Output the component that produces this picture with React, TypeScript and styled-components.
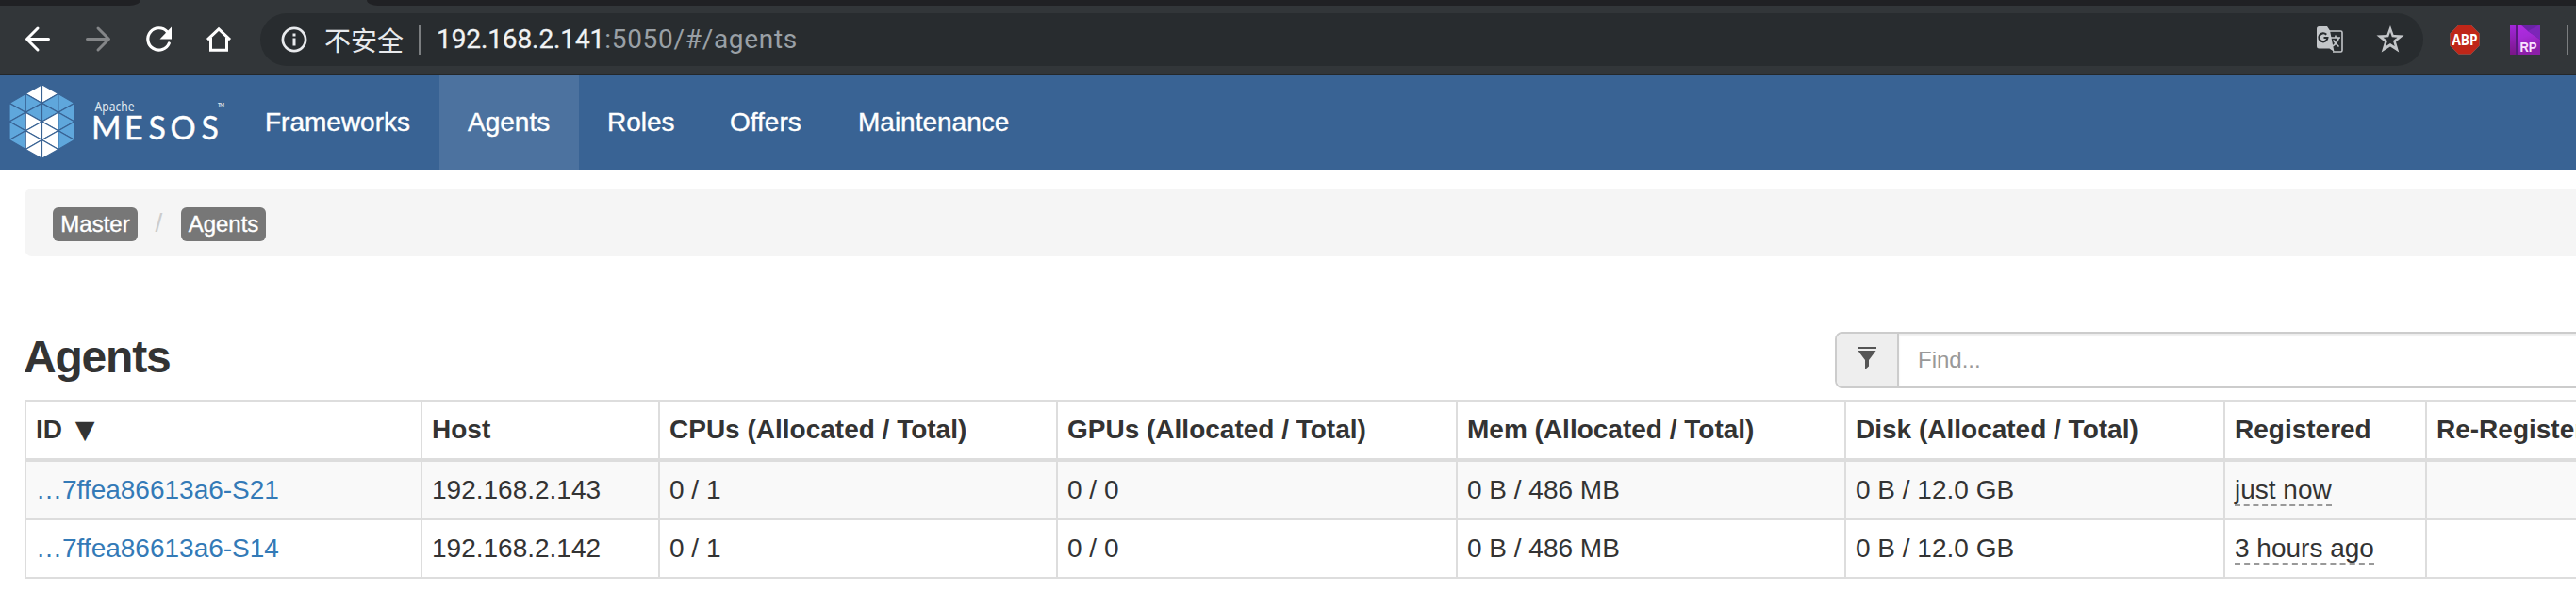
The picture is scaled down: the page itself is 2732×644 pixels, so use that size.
import React from 'react';
import styled, { createGlobalStyle, css } from 'styled-components';

const GlobalStyle = createGlobalStyle`
  * { box-sizing: border-box; }
  html, body { margin: 0; padding: 0; overflow: hidden; background: #fff; }
  body {
    font-family: "Liberation Sans", "Noto Sans CJK SC", sans-serif;
    font-size: 28px;
    line-height: 40px;
    color: #333;
  }
`;

const Page = styled.div`
  width: 2732px;
  height: 644px;
  overflow: hidden;
  background: #fff;
`;

const TabStrip = styled.div`
  display: flex;
  justify-content: space-between;
  height: 6px;
  background: #323639;
`;

const InactiveTabs = styled.div<{ $side: 'left' | 'right' }>`
  height: 6px;
  background: #202124;
  ${(p) =>
    p.$side === 'left'
      ? css`width: 149px; border-bottom-right-radius: 12px 6px;`
      : css`width: 2343px; border-bottom-left-radius: 12px 6px;`}
`;

const Toolbar = styled.div`
  display: flex;
  align-items: center;
  height: 74px;
  padding: 0 8px 1px 24px;
  background: #323639;
  border-bottom: 1px solid #242729;
  overflow: hidden;
`;

const NavButton = styled.span`
  display: flex;
  flex: none;
  width: 32px;
  height: 32px;
  margin-right: 32px;
`;

const Omnibox = styled.div`
  display: flex;
  align-items: center;
  flex: none;
  width: 2294px;
  height: 56px;
  margin-left: -4px;
  padding: 0 20px 0 21px;
  border-radius: 28px;
  background: #282c2f;
`;

const Insecure = styled.span`
  margin-left: 17px;
  font-family: "Noto Sans CJK SC", sans-serif;
  font-size: 28px;
  color: #e8eaed;
`;

const Separator = styled.span<{ $left: number }>`
  flex: none;
  width: 2px;
  height: 32px;
  margin-left: ${(p) => p.$left}px;
  background: #7b7e80;
`;

const Url = styled.span`
  flex: 1;
  margin-left: 17px;
  font-family: Roboto, sans-serif;
  letter-spacing: 0.7px;
  color: #9aa0a6;
`;

const Domain = styled.span`
  letter-spacing: -0.1px;
  color: #f1f3f4;
  -webkit-text-stroke: 0.3px #f1f3f4;
`;

const OmniIcon = styled.span<{ $left?: number }>`
  display: flex;
  flex: none;
  margin-left: ${(p) => p.$left ?? 0}px;
`;

const Navbar = styled.nav`
  display: flex;
  height: 100px;
  background: #396394;
`;

const Brand = styled.div`
  flex: none;
  width: 251px;
  height: 100px;
`;

const NavItem = styled.a<{ $width: number; $active?: boolean }>`
  flex: none;
  width: ${(p) => p.$width}px;
  padding: 30px 0 30px 30px;
  color: #fff;
  -webkit-text-stroke: 0.4px #fff;
  white-space: nowrap;
  background: ${(p) => (p.$active ? '#4c729f' : 'transparent')};
`;

const Content = styled.main`
  width: 2860px;
  padding: 20px 0 0 26px;
`;

const Breadcrumb = styled.div`
  display: flex;
  align-items: flex-start;
  height: 72px;
  padding: 20px 30px;
  border-radius: 8px;
  background: #f5f5f5;
`;

const Crumb = styled.span`
  width: 90px;
  height: 36px;
  border-radius: 6px;
  background: #777;
  color: #fff;
  font-size: 24px;
  line-height: 36px;
  text-align: center;
  -webkit-text-stroke: 0.4px #fff;
`;

const Slash = styled.span`
  width: 45px;
  margin-right: 1px;
  line-height: 34px;
  text-align: center;
  color: #ccc;
`;

const TitleRow = styled.div`
  display: flex;
  justify-content: space-between;
  align-items: flex-start;
  height: 152px;
  padding-top: 80px;
`;

const Title = styled.h2`
  margin: 0 0 0 -1px;
  font-size: 48px;
  line-height: 54px;
  font-weight: 700;
  letter-spacing: -1.2px;
`;

const Search = styled.div`
  display: flex;
  width: 914px;
  height: 60px;
  border: 2px solid #ccc;
  border-radius: 8px;
  overflow: hidden;
`;

const Addon = styled.span`
  display: flex;
  width: 66px;
  padding: 14px 0 0 21px;
  border-right: 2px solid #ccc;
  background: #eee;
`;

const Field = styled.div`
  flex: 1;
  padding: 10px 20px;
  font-size: 24px;
  line-height: 36px;
  color: #999;
  box-shadow: inset 0 2px 2px rgba(0, 0, 0, 0.075);
`;

const Table = styled.table`
  table-layout: fixed;
  width: 2832px;
  border-collapse: separate;
  border-spacing: 0;
  border: 0 solid #ddd;
  border-width: 2px 0 0 2px;
`;

const HeadCell = styled.th<{ $width: number }>`
  width: ${(p) => p.$width}px;
  height: 64px;
  padding: 10px;
  border: 0 solid #ddd;
  border-width: 0 2px 4px 0;
  text-align: left;
  white-space: nowrap;
`;

const Row = styled.tr<{ $striped: boolean }>`
  background: ${(p) => (p.$striped ? '#f9f9f9' : '#fff')};
`;

const Cell = styled.td`
  height: 62px;
  padding: 10px;
  border: 0 solid #ddd;
  border-width: 0 2px 2px 0;
  white-space: nowrap;
`;

const AgentLink = styled.a`
  color: #337ab7;
`;

const Ago = styled.span`
  border-bottom: 2px dashed #999;
`;

const SortMark = styled.span`
  margin-left: 6px;
  font-family: "DejaVu Sans", sans-serif;
  font-size: 27px;
  font-weight: 400;
  line-height: 20px;
`;

const BackIcon = () => (
  <svg width="32" height="32" viewBox="24 26 32 32" fill="none" stroke="#fff" strokeWidth="3" strokeLinecap="round" strokeLinejoin="round">
    <path d="M51.5 41.5H29M40 30L28.5 41.5L40 53" />
  </svg>
);

const ForwardIcon = () => (
  <svg width="32" height="32" viewBox="88 26 32 32" fill="none" stroke="#848688" strokeWidth="3" strokeLinecap="round" strokeLinejoin="round">
    <path d="M92.5 41.5H115M104 30L115.5 41.5L104 53" />
  </svg>
);

const ReloadIcon = () => (
  <svg width="32" height="32" viewBox="152 26 32 32">
    <path d="M177.2 33.6A11.7 11.7 0 1 0 179.3 46" fill="none" stroke="#fff" strokeWidth="3.2" strokeLinecap="round" />
    <path d="M182 28.5V41.5H169.5Z" fill="#fff" />
  </svg>
);

const HomeIcon = () => (
  <svg width="32" height="32" viewBox="216 26 32 32" fill="none" stroke="#fff" strokeWidth="3">
    <path d="M220 42.2L232 30.8L244 42.2" />
    <path d="M223.5 40V53.2H240.5V40" />
  </svg>
);

const InfoIcon = () => (
  <svg width="30" height="30" viewBox="297.5 27.5 30 30">
    <circle cx="312.5" cy="42.5" r="12.1" fill="none" stroke="#e8eaed" strokeWidth="2.7" />
    <path d="M311 36h3v3h-3zM311 41h3v8h-3z" fill="#e8eaed" />
  </svg>
);

const TranslateIcon = () => (
  <svg width="28" height="28" viewBox="0 0 28 28">
    <path d="M13 5H25.5Q27 5 27 6.5V25.5Q27 27 25.5 27H17" fill="none" stroke="#c3c6c9" strokeWidth="1.6" />
    <path d="M2.5 0H11L14 4.500L18.500 27L13.500 23.500H2.500Q0 23.500 0 21V2.500Q0 0 2.500 0Z" fill="#c3c6c9" />
    <path d="M10.200 8.700A4.500 4.500 0 1 0 11.400 12H7.500" fill="none" stroke="#282c2f" strokeWidth="2.200" />
    <path d="M15 12H25M20 9.500V12M23.500 12Q22 17 17 21M17.500 14.500Q20 18.500 23.500 21.500" fill="none" stroke="#c3c6c9" strokeWidth="1.600" />
  </svg>
);

const StarIcon = () => (
  <svg width="30" height="30" viewBox="0 0 30 30">
    <path
      d="M15 0L18.600 9.900L29.500 10.600L21 17.400L24.300 28.500L15 22.400L5.700 28.500L9 17.400L.5 10.600L11.400 9.900Z
         M15 7L13.200 12.300L7.500 12.700L12 16.300L10.300 22.100L15 19L19.700 22.100L18 16.300L22.500 12.700L16.800 12.300Z"
      fillRule="evenodd"
      fill="#c3c6c9"
    />
  </svg>
);

const AbpIcon = () => (
  <svg width="32" height="32" viewBox="0 0 32 32">
    <path d="M9.500 .5H22.500L31.500 9.500V22.500L22.500 31.500H9.500L.5 22.500V9.500Z" fill="#bf2618" stroke="#8b514b" strokeWidth="0.800" />
    <text x="16" y="22" textAnchor="middle" textLength="27" lengthAdjust="spacingAndGlyphs" fontFamily="Open Sans, sans-serif" fontWeight="700" fontSize="16.500" fill="#fff">ABP</text>
  </svg>
);

const RpIcon = () => (
  <svg width="32" height="32" viewBox="0 0 32 32">
    <defs>
      <linearGradient id="rpCover" x1="0" y1="0" x2="0.3" y2="1">
        <stop offset="0" stopColor="#b52be6" />
        <stop offset="0.5" stopColor="#a52ad6" />
        <stop offset="1" stopColor="#8c1fa8" />
      </linearGradient>
      <linearGradient id="rpSpine" x1="0" y1="0" x2="0" y2="1">
        <stop offset="0" stopColor="#a327dc" />
        <stop offset="1" stopColor="#7a1688" />
      </linearGradient>
    </defs>
    <rect width="32" height="32" fill="url(#rpCover)" />
    <path d="M11 0H32V16L19 7Z" fill="#6a22a6" />
    <path d="M19 7L32 0V16Z" fill="#7c26b8" />
    <rect width="6" height="32" fill="url(#rpSpine)" />
    <path d="M7 0V32" stroke="#571a7d" strokeWidth="2" />
    <text x="19.500" y="28.500" textAnchor="middle" textLength="18" lengthAdjust="spacingAndGlyphs" fontFamily="Liberation Sans, sans-serif" fontWeight="700" fontSize="15" fill="#f9e2ff">RP</text>
  </svg>
);

const FilterIcon = () => (
  <svg width="22" height="26" viewBox="0 0 22 26" fill="#555">
    <path d="M1 0H21V2H1ZM1.500 4H20.500L13 14V20.500L9 24V14Z" />
  </svg>
);

const X = [10, 27.2, 44.5, 61.8, 79];
const triangles: { points: string; white: boolean }[] = [];
[1, 2, 3, 4].forEach((col) => {
  const inner = col === 2 || col === 3;
  const outX = col <= 2 ? X[col - 1] : X[col];
  const inX = col <= 2 ? X[col] : X[col - 1];
  const s = 19.6;
  const outY = inner ? 49 - 1.5 * s : 49 - s;
  const inY = inner ? 49 - 2 * s : 49 - 1.5 * s;
  const count = inner ? 4 : 3;
  for (let i = 0; i < count; i++) {
    triangles.push({
      points: `${outX},${outY + i * s} ${inX},${inY + i * s} ${inX},${inY + (i + 1) * s}`,
      white: inner && i !== 1,
    });
    if (i < count - 1) {
      triangles.push({
        points: `${outX},${outY + i * s} ${outX},${outY + (i + 1) * s} ${inX},${inY + (i + 1) * s}`,
        white: inner && i > 0,
      });
    }
  }
});

const MesosLogo = () => (
  <svg width="251" height="100" viewBox="0 0 251 100">
    {triangles.map((t) => (
      <polygon key={t.points} points={t.points} fill={t.white ? '#fff' : '#5fa7dc'} stroke="#396394" strokeWidth="1.200" />
    ))}
    <text x="100.500" y="37.500" textLength="42" lengthAdjust="spacingAndGlyphs" fontFamily="Noto Sans, sans-serif" fontSize="13.500" fill="#dfe7ef">Apache</text>
    <text x="97 132 157.500 180.500 213.500" y="67.500" fontFamily="Lato, sans-serif" fontSize="34" fill="#fff" stroke="#fff" strokeWidth="0.400">MESOS</text>
    <text x="231" y="33" textLength="7" fontFamily="Lato, sans-serif" fontWeight="700" fontSize="5" fill="#dfe7ef">TM</text>
  </svg>
);

const columns = [
  { label: 'ID', width: 420, sorted: true },
  { label: 'Host', width: 252 },
  { label: 'CPUs (Allocated / Total)', width: 422 },
  { label: 'GPUs (Allocated / Total)', width: 424 },
  { label: 'Mem (Allocated / Total)', width: 412 },
  { label: 'Disk (Allocated / Total)', width: 402 },
  { label: 'Registered', width: 214 },
  { label: 'Re-Registered', width: 284 },
];

const agents = [
  { id: '…7ffea86613a6-S21', host: '192.168.2.143', registered: 'just now' },
  { id: '…7ffea86613a6-S14', host: '192.168.2.142', registered: '3 hours ago' },
];

export default function App() {
  return (
    <Page>
      <GlobalStyle />
      <TabStrip>
        <InactiveTabs $side="left" />
        <InactiveTabs $side="right" />
      </TabStrip>
      <Toolbar>
        <NavButton><BackIcon /></NavButton>
        <NavButton><ForwardIcon /></NavButton>
        <NavButton><ReloadIcon /></NavButton>
        <NavButton><HomeIcon /></NavButton>
        <Omnibox>
          <InfoIcon />
          <Insecure>不安全</Insecure>
          <Separator $left={16} />
          <Url><Domain>192.168.2.141</Domain>:5050/#/agents</Url>
          <OmniIcon><TranslateIcon /></OmniIcon>
          <OmniIcon $left={35}><StarIcon /></OmniIcon>
        </Omnibox>
        <OmniIcon $left={28}><AbpIcon /></OmniIcon>
        <OmniIcon $left={32}><RpIcon /></OmniIcon>
        <Separator $left={28} />
      </Toolbar>
      <Navbar>
        <Brand><MesosLogo /></Brand>
        <NavItem $width={215}>Frameworks</NavItem>
        <NavItem $width={148} $active>Agents</NavItem>
        <NavItem $width={130}>Roles</NavItem>
        <NavItem $width={136}>Offers</NavItem>
        <NavItem $width={222}>Maintenance</NavItem>
      </Navbar>
      <Content>
        <Breadcrumb>
          <Crumb>Master</Crumb>
          <Slash>/</Slash>
          <Crumb>Agents</Crumb>
        </Breadcrumb>
        <TitleRow>
          <Title>Agents</Title>
          <Search>
            <Addon><FilterIcon /></Addon>
            <Field>Find...</Field>
          </Search>
        </TitleRow>
        <Table>
          <thead>
            <tr>
              {columns.map((c) => (
                <HeadCell key={c.label} $width={c.width}>
                  {c.label}
                  {c.sorted && <> <SortMark>▼</SortMark></>}
                </HeadCell>
              ))}
            </tr>
          </thead>
          <tbody>
            {agents.map((a, i) => (
              <Row key={a.id} $striped={i % 2 === 0}>
                <Cell><AgentLink>{a.id}</AgentLink></Cell>
                <Cell>{a.host}</Cell>
                <Cell>0 / 1</Cell>
                <Cell>0 / 0</Cell>
                <Cell>0 B / 486 MB</Cell>
                <Cell>0 B / 12.0 GB</Cell>
                <Cell><Ago>{a.registered}</Ago></Cell>
                <Cell />
              </Row>
            ))}
          </tbody>
        </Table>
      </Content>
    </Page>
  );
}
